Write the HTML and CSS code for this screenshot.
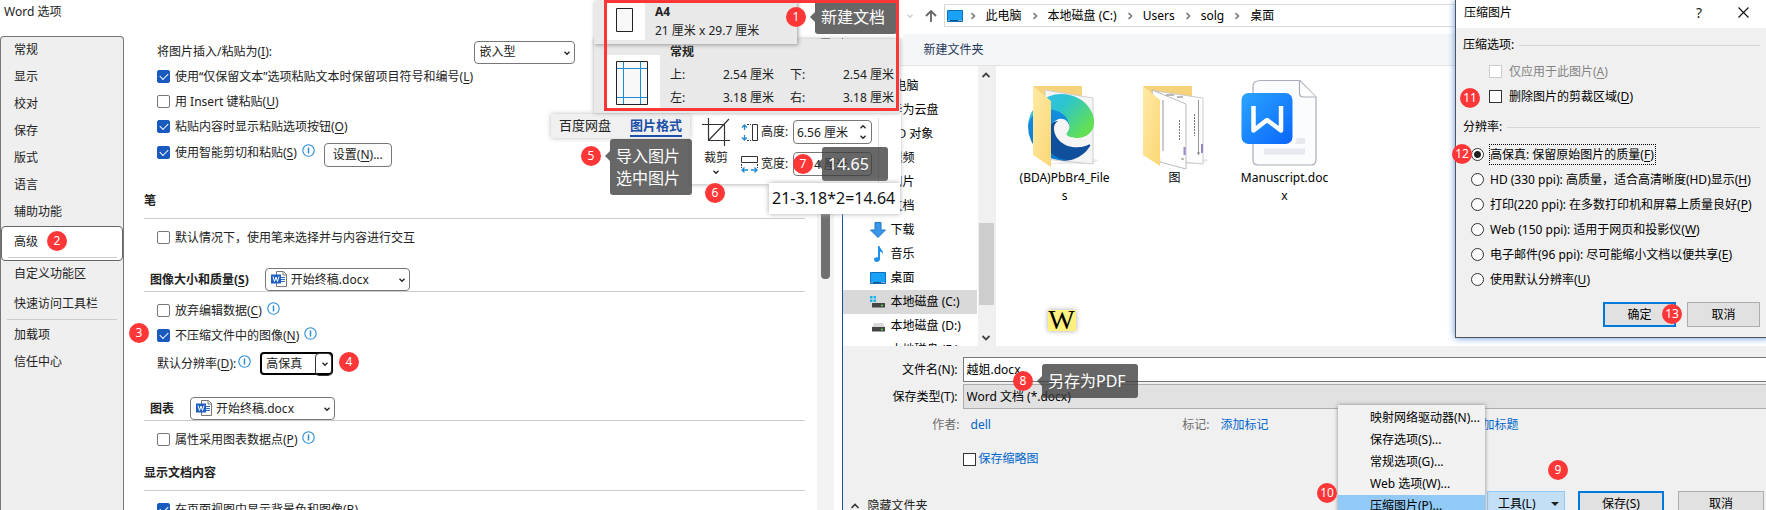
FILE: index.html
```html
<!DOCTYPE html>
<html lang="zh-CN">
<head>
<meta charset="utf-8">
<title>Word 选项</title>
<link rel="stylesheet" href="styles.css">
</head>
<body>
<svg class="defs" aria-hidden="true">
  <defs>
    <symbol id="chev" viewBox="0 0 8 8"><path d="M1.500 2.800 4 5.300 6.500 2.800" fill="none" stroke="currentColor" stroke-width="1.300"/></symbol>
    <symbol id="info" viewBox="0 0 13 13"><circle cx="6.5" cy="6.5" r="5.7" fill="#fff" stroke="#2a8dd4" stroke-width="1.1"/><path d="M6.5 3.5v6" stroke="#2a8dd4" stroke-width="1.5"/></symbol>
    <symbol id="worddoc" viewBox="0 0 17 16">
      <path d="M5.500.5h7l3 3v12h-10z" fill="#fff" stroke="#777"/><path d="M12 1v3h3.500" fill="none" stroke="#777"/>
      <path d="M10 6.500h4M10 8.500h4M10 10.500h4" stroke="#2b6cc9"/>
      <path d="M0 3.500h10v9H0z" fill="#1f5fc4"/><path d="m2 5.500 1.500 5L5 6l1.500 4.500 1.500-5" fill="none" stroke="#fff"/>
    </symbol>
    <symbol id="monitor" viewBox="0 0 16 12"><path d="M.5.5h15v11H.5z" fill="#19a2f8" stroke="#0f6fb8"/><path d="M1 10.500h14" stroke="#0b568f"/><path d="M1.500 10.500h1M11.500 10.500h1m1 0h1" stroke="#fff"/></symbol>
    <symbol id="drive" viewBox="0 0 16 16"><path d="M4 5h9l2 4.500H2z" fill="#d9d9d9"/><path d="M2 9h13v4.500H2z" fill="#444"/><path d="M11 11.500h2" stroke="#4be04b" stroke-width="1.500"/></symbol>
    <symbol id="crumb" viewBox="0 0 6 8"><path d="M1.500 1 4.500 4 1.500 7" fill="none" stroke="#777" stroke-width="1.600"/></symbol>
    <linearGradient id="fold" x1="0" y1="0" x2="1" y2="1"><stop offset="0" stop-color="#ffeaa6"/><stop offset="1" stop-color="#fbd775"/></linearGradient>
    <linearGradient id="e1" x1="0" y1="0" x2="1" y2=".6"><stop offset="0" stop-color="#37bdf5"/><stop offset=".5" stop-color="#2cc4cf"/><stop offset="1" stop-color="#62e055"/></linearGradient>
    <linearGradient id="e2" x1="0" y1="0" x2="0" y2="1"><stop offset="0" stop-color="#1490df"/><stop offset="1" stop-color="#0a78d4"/></linearGradient>
    <linearGradient id="wps" x1="0" y1="0" x2="1" y2="1"><stop offset="0" stop-color="#2ba5ff"/><stop offset="1" stop-color="#0a66fb"/></linearGradient>
  </defs>
</svg>

<main class="desktop">
  <section class="word">
    <h1 class="word-title">Word 选项</h1>
    <div class="word-body">
      <nav class="side">
        <a href="#">常规</a><a href="#">显示</a><a href="#">校对</a><a href="#">保存</a><a href="#">版式</a><a href="#">语言</a><a href="#">辅助功能</a>
        <a href="#" class="current">高级</a>
        <a href="#">自定义功能区</a><a href="#" class="quick">快速访问工具栏</a>
        <a href="#">加载项</a><a href="#">信任中心</a>
      </nav>
      <form class="opts">
        <div class="row first"><label for="wrap">将图片插入/粘贴为(<u>I</u>):</label>
          <span class="pick wrap-pick"><select id="wrap"><option>嵌入型</option></select><svg class="chev"><use href="#chev"/></svg></span></div>
        <div class="row"><label><input type="checkbox" checked>使用“仅保留文本”选项粘贴文本时保留项目符号和编号(<u>L</u>)</label></div>
        <div class="row"><label><input type="checkbox">用 Insert 键粘贴(<u>U</u>)</label></div>
        <div class="row"><label><input type="checkbox" checked>粘贴内容时显示粘贴选项按钮(<u>O</u>)</label></div>
        <div class="row smart"><label><input type="checkbox" checked>使用智能剪切和粘贴(<u>S</u>)</label><svg class="info"><use href="#info"/></svg><button type="button" class="set">设置(<u>N</u>)...</button></div>
        <h2 class="tall pen">笔</h2>
        <div class="row"><label><input type="checkbox">默认情况下，使用笔来选择并与内容进行交互</label></div>
        <div class="head"><h2><label for="imgdoc">图像大小和质量(<u>S</u>)</label></h2>
          <span class="pick doc"><svg class="docicon"><use href="#worddoc"/></svg><select id="imgdoc"><option>开始终稿.docx</option></select><svg class="chev"><use href="#chev"/></svg></span></div>
        <div class="row"><label><input type="checkbox">放弃编辑数据(<u>C</u>)</label><svg class="info"><use href="#info"/></svg></div>
        <div class="row"><label><input type="checkbox" checked>不压缩文件中的图像(<u>N</u>)</label><svg class="info"><use href="#info"/></svg></div>
        <div class="row res"><label for="res">默认分辨率(<u>D</u>):</label><svg class="info"><use href="#info"/></svg>
          <span class="pick res-pick"><select id="res"><option>高保真</option></select><svg class="chev"><use href="#chev"/></svg></span></div>
        <div class="head"><h2><label for="chartdoc">图表</label></h2>
          <span class="pick doc"><svg class="docicon"><use href="#worddoc"/></svg><select id="chartdoc"><option>开始终稿.docx</option></select><svg class="chev"><use href="#chev"/></svg></span></div>
        <div class="row"><label><input type="checkbox">属性采用图表数据点(<u>P</u>)</label><svg class="info"><use href="#info"/></svg></div>
        <h2 class="tall">显示文档内容</h2>
        <div class="row"><label><input type="checkbox" checked>在页面视图中显示背景色和图像(<u>B</u>)</label></div>
      </form>
      <div class="wscroll"><div class="wthumb"></div></div>
    </div>
  </section>

  <section class="explorer">
    <div class="address">
      <svg class="recent"><use href="#chev"/></svg>
      <svg class="up" viewBox="0 0 12 14"><path d="M6 13V2M1 7l5-5 5 5" fill="none" stroke="#666" stroke-width="1.800"/></svg>
      <div class="path">
        <svg class="mon"><use href="#monitor"/></svg><svg class="crumb"><use href="#crumb"/></svg>
        <a href="#">此电脑</a><svg class="crumb"><use href="#crumb"/></svg>
        <a href="#">本地磁盘 (C:)</a><svg class="crumb"><use href="#crumb"/></svg>
        <a href="#">Users</a><svg class="crumb"><use href="#crumb"/></svg>
        <a href="#">solg</a><svg class="crumb"><use href="#crumb"/></svg>
        <a href="#">桌面</a>
      </div>
    </div>
    <div class="tools"><button type="button">新建文件夹</button></div>
    <div class="browse">
      <nav class="tree">
        <a href="#" class="root">此电脑</a>
        <a href="#"><i></i>华为云盘</a>
        <a href="#"><i></i>3D 对象</a>
        <a href="#"><i></i>视频</a>
        <a href="#"><i></i>图片</a>
        <a href="#"><i></i>文档</a>
        <a href="#"><svg viewBox="0 0 16 16"><path d="M5 .5h6V8h4.500L8 15.500.5 8H5z" fill="#3a96e8" stroke="#2378c4"/></svg>下载</a>
        <a href="#"><svg viewBox="0 0 16 16"><path d="M8 0h1.500c.5 3 4 4 3.500 8.500-.5-2-1.500-2.500-3-3V13c0 4-6.500 3.500-6 .5.300-2 2-2.500 4-2z" fill="#1e90ea"/></svg>音乐</a>
        <a href="#"><svg viewBox="0 -2 16 16"><use href="#monitor" width="16" height="12"/></svg>桌面</a>
        <a href="#" class="sel"><svg viewBox="0 0 16 16"><use href="#drive" width="16" height="16"/><path d="M0 2h2.500v2.500H0zM3.500 2H6v2.500H3.500zM0 5.500h2.500V8H0zM3.500 5.500H6V8H3.500z" fill="#16b4e8"/></svg>本地磁盘 (C:)</a>
        <a href="#"><svg><use href="#drive"/></svg>本地磁盘 (D:)</a>
        <a href="#"><i></i>本地磁盘 (E:)</a>
      </nav>
      <div class="escroll"><svg viewBox="0 0 8 8"><path d="M.5 6 4 2.500 7.500 6" fill="none" stroke="#444" stroke-width="1.800"/></svg><div class="ethumb"></div><svg viewBox="0 0 8 8"><path d="M.5 2 4 5.500 7.500 2" fill="none" stroke="#444" stroke-width="1.800"/></svg></div>
      <div class="files">
        <a href="#" class="file">
          <svg viewBox="0 0 76 90">
            <path d="M62 79l10 2-8 4H20z" fill="#ddd" opacity=".6"/>
            <path d="M6 7h49v74H22L6 76z" fill="#f6d37a"/>
            <path d="M18 11l48 8v66l-48-5z" fill="#f5f5f5" stroke="#cfcfcf"/>
            <g transform="translate(1 15) scale(.258)">
              <path d="M235.700 195.500a94 94 0 0 1-10.600 4.700 102 102 0 0 1-35.900 6.400c-47.300 0-88.500-32.500-88.500-74.300A31.500 31.500 0 0 1 117.100 105c-42.800 1.800-53.800 46.400-53.800 72.500 0 73.900 68.100 81.400 82.800 81.400 7.900 0 19.800-2.300 27-4.600l1.300-.4a128.300 128.300 0 0 0 66.600-52.800 4 4 0 0 0-5.300-5.600z" fill="#0f4f9c"/>
              <path d="M105.700 241.400A79.200 79.200 0 0 1 83 220.100a80.700 80.700 0 0 1 29.500-120c3.100-1.500 8.500-4.100 15.500-4a32.400 32.400 0 0 1 25.700 13 31.900 31.900 0 0 1 6.400 18.600c0-.2 24.500-79.600-80-79.600-43.900 0-80 41.700-80 78.200a130 130 0 0 0 12.100 56 128 128 0 0 0 156.400 67.100 75.600 75.600 0 0 1-62.800-8z" fill="url(#e2)"/>
              <path d="M152.300 148.900c-.8 1-3.300 2.500-3.300 5.600 0 2.600 1.700 5.100 4.700 7.200 14.400 10 41.500 8.700 41.600 8.700a59.600 59.600 0 0 0 30.300-8.300 61.400 61.400 0 0 0 30.400-52.900c.3-22.400-8-37.300-11.300-43.900C223.500 23.800 177.700 0 128 0A128 128 0 0 0 0 126.200c.5-36.500 36.800-66 80-66 3.500 0 23.500.3 42 10 16.300 8.600 24.900 19 30.900 29.200 6.200 10.700 7.300 24.200 7.300 29.500s-2.700 13.400-7.900 20z" fill="url(#e1)"/>
            </g>
            <path d="M6 7l18 15v66L6 76z" fill="url(#fold)"/>
          </svg>
          <span>(BDA)PbBr4_Files</span></a>
        <a href="#" class="file">
          <svg viewBox="0 0 76 90">
            <path d="M62 79l10 2-8 4H40z" fill="#ddd" opacity=".6"/>
            <path d="M6 7h49v74H22L6 76z" fill="#f6d37a"/>
            <path d="M18 12l48 7v66l-30-3z" fill="#fdfdfd" stroke="#ccc"/>
            <path d="M15 11l34 14v65l-26-7z" fill="#fff" stroke="#bbb"/>
            <path d="M26 21v51M61.500 21v55" stroke="#999"/><path d="M57.500 35v22M42.500 41v21" stroke="#777" stroke-dasharray="2 1"/>
            <path d="M47.500 68v8M65 65v9" stroke="#9a86c4" stroke-width="2"/><path d="M44 80h3M60 74h3M29 16h8M40 18h6" stroke="#777"/>
            <path d="M6 7l17 14v66L6 76z" fill="url(#fold)"/>
          </svg>
          <span>图</span></a>
        <a href="#" class="file">
          <svg viewBox="3 1 76 90">
            <path d="M17 2.500h39L72 19v63q0 5-5 5H14q-5 0-5-5V8q0-5.500 8-5.500z" fill="#fbfcfe" stroke="#a9abb8" stroke-width="1.200"/>
            <path d="M55.500 3v12q0 4 4 4H72" fill="#fff" stroke="#a9abb8" stroke-width="1.200"/>
            <path d="M53 60h8v6H51zM20 70.500h41v6H20z" fill="#e6eaee"/>
            <rect x="-2.500" y="15" width="51" height="51" rx="7" fill="url(#wps)"/>
            <path d="M9.500 28v24.500L23 42l14 10.500V28" fill="none" stroke="#fff" stroke-width="4.500" stroke-linejoin="round"/>
          </svg>
          <span>Manuscript.docx</span></a>
        <div class="mark">W</div>
      </div>
    </div>
    <form class="save">
      <div class="field"><label for="fn">文件名(N):</label><input id="fn" type="text" value="越姐.docx"></div>
      <div class="field"><label for="ft">保存类型(T):</label><select id="ft"><option>Word 文档 (*.docx)</option></select></div>
      <div class="meta"><span>作者:</span><a href="#">dell</a><span>标记:</span><a href="#">添加标记</a><span>标题:</span><a href="#">添加标题</a></div>
      <label class="thumbs"><input type="checkbox">保存缩略图</label>
      <div class="actions">
        <button type="button" class="hide"><svg viewBox="0 0 8 8"><path d="M.5 6 4 2.500 7.500 6" fill="none" stroke="#333" stroke-width="1.600"/></svg>隐藏文件夹</button>
        <button type="button" class="btn tool">工具(L)<b></b></button>
        <button type="button" class="btn main">保存(S)</button>
        <button type="button" class="btn">取消</button>
      </div>
    </form>
  </section>

  <div class="menu" role="menu">
    <button type="button" role="menuitem">映射网络驱动器(N)...</button>
    <button type="button" role="menuitem">保存选项(S)...</button>
    <button type="button" role="menuitem">常规选项(G)...</button>
    <button type="button" role="menuitem">Web 选项(W)...</button>
    <button type="button" role="menuitem" class="on">压缩图片(P)...</button>
  </div>

  <section class="dialog" role="dialog" aria-label="压缩图片">
    <header><h2>压缩图片</h2><button type="button" class="help">?</button><button type="button" class="close" aria-label="关闭"><svg viewBox="0 0 11 11"><path d="M.5.5l10 10M10.500.5l-10 10" stroke="#111" stroke-width="1.100"/></svg></button></header>
    <form>
      <h3>压缩选项:</h3>
      <label class="chk off"><input type="checkbox" disabled>仅应用于此图片(<u>A</u>)</label>
      <label class="chk"><input type="checkbox">删除图片的剪裁区域(<u>D</u>)</label>
      <h3 class="second">分辨率:</h3>
      <label class="rad"><input type="radio" name="ppi" checked><span class="focus">高保真: 保留原始图片的质量(<u>F</u>)</span></label>
      <label class="rad"><input type="radio" name="ppi"><span>HD (330 ppi): 高质量，适合高清晰度(HD)显示(<u>H</u>)</span></label>
      <label class="rad"><input type="radio" name="ppi"><span>打印(220 ppi): 在多数打印机和屏幕上质量良好(<u>P</u>)</span></label>
      <label class="rad"><input type="radio" name="ppi"><span>Web (150 ppi): 适用于网页和投影仪(<u>W</u>)</span></label>
      <label class="rad"><input type="radio" name="ppi"><span>电子邮件(96 ppi): 尽可能缩小文档以便共享(<u>E</u>)</span></label>
      <label class="rad"><input type="radio" name="ppi"><span>使用默认分辨率(<u>U</u>)</span></label>
      <footer><button type="button" class="btn main">确定</button><button type="button" class="btn">取消</button></footer>
    </form>
  </section>

  <div class="ribbon">
    <button type="button" class="crop"><svg viewBox="0 0 28 28"><path d="M0 6.500h22.500V28M6.500 0v22.500H28M6.500 22.500 27 1" fill="none" stroke="#333" stroke-width="1.200"/></svg>裁剪<svg class="chev"><use href="#chev"/></svg></button>
    <div class="sizes">
      <div class="size"><svg viewBox="0 0 17 17"><path d="M3.500 1v5M3.500 11v5M1 3.500 3.500 1 6 3.500M1 13.500 3.500 16 6 13.500" fill="none" stroke="#1e8ad6" stroke-width="1.300"/><path d="M11.500.5h5v16h-5z" fill="none" stroke="#333"/><path d="M6 .5h4M6 16.500h4" stroke="#333" stroke-dasharray="2 1"/></svg>
        <label for="h">高度:</label><span class="spin"><input id="h" type="text" value="6.56 厘米"><svg class="chev flip"><use href="#chev"/></svg><svg class="chev"><use href="#chev"/></svg></span></div>
      <div class="size"><svg viewBox="0 0 17 17"><path d="M.5.5h16v6H.5z" fill="none" stroke="#333"/><path d="M.5 8v4M16.500 8v4" stroke="#333" stroke-dasharray="2 1"/><path d="M1 14h6M10 14h6M3.500 11.500 1 14l2.500 2.500M13.500 11.500 16 14l-2.500 2.500" fill="none" stroke="#1e8ad6" stroke-width="1.300"/></svg>
        <label for="w">宽度:</label><span class="spin"><input id="w" type="text" value="9.14 厘米"><svg class="chev flip"><use href="#chev"/></svg><svg class="chev"><use href="#chev"/></svg></span></div>
    </div>
  </div>
  <div class="tabs"><a href="#">百度网盘</a><a href="#" class="active">图片格式</a></div>

  <div class="blank"></div>
  <div class="margins">
    <svg viewBox="0 0 53 53"><path d="M0 0h53v53H0z" fill="#fff"/><path d="M9.500 6.500h31v43h-31z" fill="#f8f8f8" stroke="#222"/><path d="M16.500 7v42M33.500 7v42M10 13.500h30M10 42.500h30" stroke="#1e8ad6"/></svg>
    <dl><dt class="name">常规</dt><dt>上:</dt><dd>2.54 厘米</dd><dt>下:</dt><dd>2.54 厘米</dd><dt>左:</dt><dd>3.18 厘米</dd><dt>右:</dt><dd>3.18 厘米</dd></dl>
  </div>
  <div class="paper">
    <svg viewBox="0 0 38 38"><path d="M0 0h38v38H0z" fill="#fff"/><path d="M9.500 6.500h16v23h-16z" fill="#f8f8f8" stroke="#222"/></svg>
    <p><b>A4</b><br>21 厘米 x 29.7 厘米</p>
  </div>
  <div class="tip t1">新建文档</div>
  <div class="frame"></div>
  <div class="tip t5">导入图片<br>选中图片</div>
  <div class="tip t7">14.65</div>
  <div class="tip t8">另存为PDF</div>
  <div class="formula">21-3.18*2=14.64</div>

  <span class="badge b1">1</span><span class="badge b2">2</span><span class="badge b3">3</span><span class="badge b4">4</span><span class="badge b5">5</span><span class="badge b6">6</span><span class="badge b7">7</span><span class="badge b8">8</span><span class="badge b9">9</span><span class="badge b10">10</span><span class="badge b11">11</span><span class="badge b12">12</span><span class="badge b13">13</span>
</main>
</body>
</html>
```
FILE: styles.css
```css
* { box-sizing: border-box; }
body { margin: 0; background: #fff; }
body, button, input, select { font: 12px/18px "Noto Sans", "Noto Sans CJK SC", sans-serif; color: #222; }
h1, h2, h3, p, dl, dd { margin: 0; font-size: 12px; }
h1, h3 { font-weight: 400; }
a { color: inherit; text-decoration: none; }
button { padding: 0; border: 0; background: none; white-space: nowrap; }
svg { flex: none; overflow: visible; }
u { text-underline-offset: 2px; }
.defs { position: absolute; width: 0; height: 0; }
.chev { width: 8px; height: 8px; }
.flip { transform: rotate(180deg); }

.desktop { position: relative; display: flex; height: 100vh; overflow: hidden; white-space: nowrap; }

/* Word options */
.word { flex: 842 1 0; min-width: 0; display: flex; flex-direction: column; overflow: hidden; }
.word-title { height: 36px; padding: 2px 4px; flex: none; line-height: 20px; }
.word-body { flex: 1; min-height: 0; display: flex; }
.side { width: 124px; flex: none; background: #efefef; border: 1px solid #777; border-bottom: 0; border-radius: 4px 4px 0 0; }
.side a { display: block; height: 27px; line-height: 26px; padding-left: 13px; }
.side .current { height: 35px; line-height: 30px; background: #fff; border: 1px solid #666; border-radius: 4px; padding-left: 12px; }
.side .current::after { content: ""; display: block; margin: 0 5px 0 -6px; border-top: 1px solid #ccc; }
.side .quick { height: 34px; line-height: 32px; }
.side .quick::after { content: ""; display: block; margin: -1px 6px 0 -7px; border-top: 1px solid #ccc; }
.opts { flex: 1; min-width: 0; padding: 4px 12px 0 20px; }
.row { display: flex; align-items: center; height: 25px; padding-left: 13px; }
.row label, .chk { display: flex; align-items: center; white-space: pre; }
.row.first { height: 24px; }
.row.smart { height: 27px; }
.row.res { height: 31px; }
.row input { margin: 0 5px 0 0; }
input[type=checkbox] { appearance: none; width: 13px; height: 13px; flex: none; border: 1px solid #777; border-radius: 2px; background: #fff; }
input[type=checkbox]:checked { background: #185abd; border-color: #185abd; display: grid; place-items: center; }
input[type=checkbox]:checked::after { content: ""; width: 7px; height: 4px; margin-bottom: 2px; border: solid #fff; border-width: 0 0 1px 1px; transform: rotate(-45deg); }
.info { width: 13px; height: 13px; margin: 0 0 4px 5px; }
.set { height: 24px; margin: 5px 0 0 9px; padding: 0 8px; border: 1px solid #777; border-radius: 4px; background: #fdfdfd; }
.pick { position: relative; display: flex; height: 23px; }
.pick select { appearance: none; width: 100%; border: 1px solid #777; border-radius: 4px; background: #fff; padding: 0 5px; }
.pick .chev { position: absolute; right: 4px; top: 8px; }
.wrap-pick { width: 101px; margin-left: auto; margin-right: 230px; }
.doc { width: 145px; }
.doc select { padding-left: 25px; }
.docicon { position: absolute; left: 6px; top: 3px; width: 17px; height: 16px; }
.res-pick { width: 73px; margin-left: 9px; }
.res-pick select { border: 2px solid #000; padding-left: 4px; }
.res-pick::after { content: ""; position: absolute; right: 1px; top: 1px; width: 15px; height: 21px; border: 1px solid #333; border-radius: 4px; }
.res .info { margin-left: 2px; }
.tall { height: 35px; line-height: 34px; margin: 4px 0 6px; border-bottom: 1px solid #ccc; }
.tall.pen { margin-top: 18px; }
.head { display: flex; align-items: center; gap: 16px; height: 24px; margin: 18px 0 6px; padding-left: 6px; border-bottom: 1px solid #ccc; }
.wscroll { width: 17px; margin-right: 8px; flex: none; background: #f3f3f3; }
.wthumb { width: 9px; height: 243px; margin: 0 4px; background: #707070; border-radius: 4px; }

/* Save-as window */
.explorer { flex: 924 1 0; min-width: 0; display: flex; flex-direction: column; border-left: 1px solid #1a4f9c; background: #fff; color: #000; overflow: hidden; }
.address { display: flex; align-items: center; height: 34px; flex: none; padding: 0 0 3px 63px; }
.recent { width: 8px; height: 8px; color: #ccc; margin-right: 11px; }
.up { width: 12px; height: 14px; margin-right: 7px; }
.path { flex: 1; display: flex; align-items: center; gap: 10px; height: 23px; padding-left: 2px; border: 1px solid #d9d9d9; border-right: 0; }
.mon { width: 16px; height: 12px; margin-right: -3px; }
.crumb { width: 6px; height: 8px; }
.tools { height: 32px; flex: none; padding-left: 81px; background: #f5f6f7; border-bottom: 1px solid #e3e3e3; }
.tools button { color: #1e395b; line-height: 32px; }
.browse { display: flex; flex: none; height: 280px; overflow: hidden; }
.tree { width: 134px; padding-top: 8px; flex: none; }
.tree a { display: flex; align-items: center; gap: 5px; height: 24px; padding-left: 27px; }
.tree .root { padding-left: 40px; }
.tree i, .tree svg { width: 16px; height: 16px; flex: none; }
.tree .sel { background: #d9d9d9; }
.escroll { width: 17px; flex: none; margin-left: 1px; display: flex; flex-direction: column; align-items: center; padding: 5px 0 4px; background: #f0f0f0; }
.escroll svg, .hide svg { width: 8px; height: 8px; }
.ethumb { width: 15px; height: 82px; margin: 144px 0 auto; background: #cdcdcd; }
.files { flex: 1; display: grid; grid-template-columns: repeat(3, 94px); grid-template-rows: 231px auto; column-gap: 16px; padding: 13px 0 0 22px; border-left: 1px solid #eee; }
.file { display: flex; flex-direction: column; align-items: center; line-height: 18px; text-align: center; white-space: normal; }
.file svg { width: 76px; height: 90px; }
.file span { width: 92px; overflow-wrap: anywhere; }
.mark { width: 28px; height: 21px; margin-left: 30px; background: #fff080; box-shadow: 0 0 5px #aaa; font: 28px/20px "Liberation Serif", serif; text-align: center; }
.save { flex: 1; padding-top: 11px; background: #f0f0f0; }
.field { display: flex; align-items: center; height: 25px; margin-bottom: 2px; }
.field label { width: 115px; text-align: right; margin-right: 5px; }
.field input, .field select { appearance: none; flex: 1; height: 25px; padding: 0 3px 2px; color: #000; border: 1px solid #777; border-right: 0; border-radius: 0; background: #fff; }
.field select { background: #e1e1e1; border-color: #adadad; padding: 0 3px; }
.meta { display: grid; grid-template-columns: 117px 190px 38px 190px 38px auto; column-gap: 11px; height: 28px; line-height: 28px; color: #0066cc; }
.meta span { color: #6d6d6d; text-align: right; }
.thumbs { display: flex; align-items: center; gap: 3px; width: 200px; height: 26px; margin: 7px 0 0 120px; color: #0066cc; }
.thumbs input, .chk input { margin: 0; border-color: #333; border-radius: 0; }
.actions { display: flex; align-items: center; height: 25px; margin-top: 19px; padding-right: 2px; }
.hide { display: flex; align-items: center; gap: 9px; margin: 5px auto 0 8px; }
.btn { width: 86px; height: 25px; margin-left: 14px; border: 1px solid #adadad; background: #e1e1e1; color: #000; }
.btn.main { border: 2px solid #0078d7; }
.btn.tool { display: flex; align-items: center; justify-content: space-between; width: 78px; padding: 0 5px 0 10px; margin-right: -1px; background: #c3dff5; border-color: #91c9f7; }
.tool b { border: 4px solid transparent; border-top-color: #222; border-bottom: 0; }

.menu { position: absolute; left: 1338px; top: 405px; width: 147px; padding-top: 2px; background: #f2f2f2; box-shadow: 0 0 4px #888; }
.menu button { display: block; width: 100%; height: 22px; padding-left: 32px; text-align: left; color: #000; }
.menu .on { background: #91c9f7; }

/* Compress pictures */
.dialog { position: absolute; left: 1455px; right: -4px; top: 0; height: 338px; background: #f0f0f0; border: solid #555; border-width: 0 0 1px 1px; box-shadow: 0 0 7px #5b95dd; color: #000; }
.dialog header { display: flex; align-items: center; height: 28px; padding: 0 21px 3px 8px; background: #fff; }
.dialog h2 { font-weight: 400; margin-right: auto; }
.help { font-size: 14px; margin-right: 36px; }
.close svg { display: block; width: 11px; height: 11px; }
.dialog form { padding: 8px 10px 0 7px; }
.dialog h3 { display: flex; align-items: center; gap: 5px; height: 18px; }
.dialog h3::after { content: ""; flex: 1; border-top: 1px solid #d5d5d5; }
.dialog .second { margin: 9px 0 6px; }
.chk, .rad { height: 25px; }
.chk { padding-left: 26px; }
.chk input { margin-right: 7px; }
h3 + .chk { margin-top: 5px; }
.off { color: #838383; }
.chk.off input { border-color: #ccc; }
.rad { display: flex; align-items: center; gap: 5px; padding-left: 8px; }
.rad input { appearance: none; width: 13px; height: 13px; margin: 0; flex: none; border: 1px solid #333; border-radius: 50%; background: #fff; }
.rad input:checked { background: radial-gradient(circle, #222 0 3px, #fff 4px); }
.rad span { border: 1px dotted transparent; line-height: 19px; }
.rad .focus { border-color: #000; padding-right: 1px; }
.dialog footer { display: flex; justify-content: flex-end; gap: 11px; margin-top: 10px; }
.dialog .btn { width: 73px; margin: 0; }

/* Picture format fragments */
.ribbon { position: absolute; left: 690px; top: 112px; width: 211px; height: 72px; display: flex; padding: 6px 0 0 12px; gap: 11px; background: #fff; box-shadow: 0 1px 4px #bbb; }
.crop { width: 28px; display: flex; flex-direction: column; align-items: center; gap: 1px; }
.crop svg:first-child { width: 28px; height: 28px; margin-bottom: 2px; }
.sizes { display: flex; flex-direction: column; gap: 8px; padding-top: 2px; padding-right: 6px; border-right: 1px solid #ddd; }
.size { display: flex; align-items: center; height: 24px; }
.size > svg { width: 17px; height: 17px; margin-right: 3px; }
.size label { width: 32px; }
.spin { position: relative; }
.spin input { display: block; width: 79px; height: 24px; padding: 0 3px; border: 1px solid #777; border-radius: 4px; }
.spin .chev { position: absolute; right: 5px; bottom: 3px; }
.spin .flip { top: 3px; }
.tabs { position: absolute; left: 551px; top: 114px; display: flex; gap: 19px; height: 24px; padding: 0 8px; background: #f0f0f0; box-shadow: 0 0 5px #bbb; font-size: 13px; line-height: 22px; }
.tabs a { height: 23px; }
.active { color: #1a4fa8; font-weight: 700; border-bottom: 2px solid #1a4fa8; }
.blank { position: absolute; left: 796px; top: 0; width: 107px; height: 38px; background: #fff; }
.margins { position: absolute; left: 594px; top: 39px; width: 306px; height: 74px; display: flex; padding: 16px 0 0 13px; gap: 10px; background: #e9e9e9; box-shadow: 0 0 4px #aaa; }
.margins svg { width: 53px; height: 53px; }
.margins dl { display: grid; grid-template-columns: 53px 67px 53px 53px; grid-template-rows: 23px 23px 23px; margin-top: -12px; }
.name { grid-column: 1 / -1; font-weight: 700; }
.paper { position: absolute; left: 594px; top: 1px; width: 203px; height: 43px; display: flex; gap: 10px; padding: 1px 0 0 13px; background: #e9e9e9; box-shadow: 1px 1px 4px #999; }
.paper svg { width: 38px; height: 38px; }
.paper p { line-height: 19px; }
.frame { position: absolute; left: 604px; top: 0; width: 295px; height: 111px; border: 3px solid #fd3737; }
.formula { position: absolute; left: 769px; top: 183px; height: 31px; padding: 0 5px 0 3px; background: #fff; box-shadow: 0 0 5px #aaa; font-size: 16px; line-height: 31px; color: #111; }

.tip { position: absolute; height: 34px; padding: 0 12px 0 6px; border-radius: 3px; background: rgba(60, 60, 60, .78); color: #fff; font-size: 16px; line-height: 34px; }
.tip::before { content: ""; position: absolute; right: 100%; top: 12px; border: 5px solid transparent; border-left: 0; border-right-color: rgba(60, 60, 60, .78); }
.t1 { left: 815px; top: 0; }
.t5 { left: 610px; top: 139px; height: 56px; padding: 6px 12px 0 6px; line-height: 22px; }
.t7 { left: 822px; top: 147px; width: 66px; }
.t8 { left: 1042px; top: 364px; }
.badge { position: absolute; width: 20px; height: 20px; border-radius: 50%; background: #fd3737; color: #fff; line-height: 20px; text-align: center; }
.b1 { left: 786px; top: 7px; }
.b2 { left: 47px; top: 231px; }
.b3 { left: 129px; top: 323px; }
.b4 { left: 339px; top: 352px; }
.b5 { left: 581px; top: 146px; }
.b6 { left: 705px; top: 183px; }
.b7 { left: 793px; top: 154px; }
.b8 { left: 1013px; top: 371px; }
.b9 { left: 1548px; top: 460px; }
.b10 { left: 1317px; top: 483px; }
.b11 { left: 1460px; top: 88px; }
.b12 { left: 1452px; top: 144px; }
.b13 { left: 1662px; top: 304px; }
```
